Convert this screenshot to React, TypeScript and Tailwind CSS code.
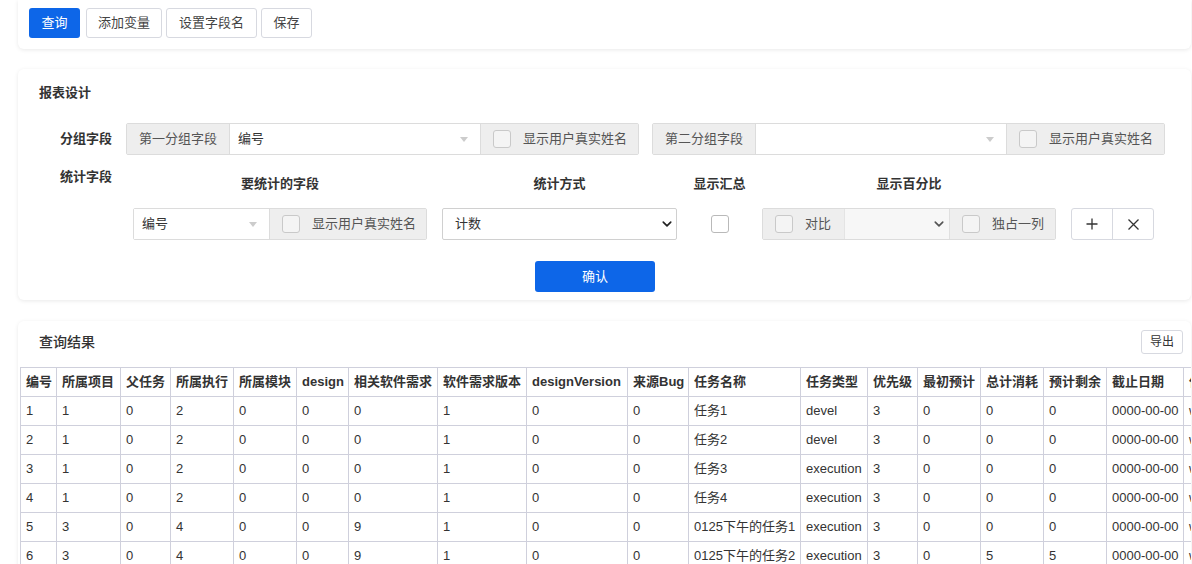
import React from 'react';

const Check = ({ className = '' }: { className?: string }) => (
  <span className={`inline-block w-[18px] h-[18px] rounded-[3px] border border-[#c9c9c9] bg-[#f4f4f4] ${className}`} />
);

const Caret = () => (
  <span className="w-0 h-0 border-l-[4px] border-r-[4px] border-t-[5px] border-l-transparent border-r-transparent border-t-[#cccccc]" />
);

const Chevron = ({ color = '#222' }: { color?: string }) => (
  <svg width="10" height="10" viewBox="0 0 16 16" fill="none" stroke={color} strokeWidth="2.6" strokeLinecap="round" strokeLinejoin="round">
    <path d="M2 5l6 6 6-6" />
  </svg>
);

const GroupField = ({ label }: { label: string }) => (
  <div className="flex h-[32px] w-[513px] border border-[#dcdcdc] rounded-[2px] text-[13px]">
    <div className="w-[103px] flex items-center justify-center bg-[#eeeeee] text-[#555] border-r border-[#dcdcdc]">{label}</div>
    <div className="w-[250px] flex items-center justify-between pl-[8px] pr-[12px] bg-white text-[#333]">
      <span>{label === '第一分组字段' ? '编号' : ''}</span>
      <Caret />
    </div>
    <div className="flex-1 flex items-center gap-[12px] pl-[12px] bg-[#eeeeee] text-[#555] border-l border-[#dcdcdc]">
      <Check />
      <span>显示用户真实姓名</span>
    </div>
  </div>
);

const cols: { name: string; w: number }[] = [
  { name: '编号', w: 36 },
  { name: '所属项目', w: 64 },
  { name: '父任务', w: 50 },
  { name: '所属执行', w: 63 },
  { name: '所属模块', w: 63 },
  { name: 'design', w: 52 },
  { name: '相关软件需求', w: 89 },
  { name: '软件需求版本', w: 89 },
  { name: 'designVersion', w: 101 },
  { name: '来源Bug', w: 61 },
  { name: '任务名称', w: 112 },
  { name: '任务类型', w: 67 },
  { name: '优先级', w: 50 },
  { name: '最初预计', w: 63 },
  { name: '总计消耗', w: 63 },
  { name: '预计剩余', w: 63 },
  { name: '截止日期', w: 77 },
  { name: '任务状态', w: 70 },
];

const rows: string[][] = [
  ['1', '1', '0', '2', '0', '0', '0', '1', '0', '0', '任务1', 'devel', '3', '0', '0', '0', '0000-00-00', 'wait'],
  ['2', '1', '0', '2', '0', '0', '0', '1', '0', '0', '任务2', 'devel', '3', '0', '0', '0', '0000-00-00', 'wait'],
  ['3', '1', '0', '2', '0', '0', '0', '1', '0', '0', '任务3', 'execution', '3', '0', '0', '0', '0000-00-00', 'wait'],
  ['4', '1', '0', '2', '0', '0', '0', '1', '0', '0', '任务4', 'execution', '3', '0', '0', '0', '0000-00-00', 'wait'],
  ['5', '3', '0', '4', '0', '0', '9', '1', '0', '0', '0125下午的任务1', 'execution', '3', '0', '0', '0', '0000-00-00', 'wait'],
  ['6', '3', '0', '4', '0', '0', '9', '1', '0', '0', '0125下午的任务2', 'execution', '3', '0', '5', '5', '0000-00-00', 'wait'],
];

export default function App() {
  return (
    <div className="w-[1192px] h-[564px] overflow-hidden bg-white text-[#333] font-['Liberation_Sans','Noto_Sans_CJK_SC',sans-serif]">
      {/* toolbar */}
      <div className="ml-[18px] mr-[1px] h-[49px] bg-white rounded-b-[6px] shadow-[0_1px_4px_rgba(0,0,0,0.09)] flex items-start pt-[8px] pl-[11px] text-[13px]">
        <button className="h-[30px] w-[51px] rounded-[3px] bg-[#0d66e8] text-white">查询</button>
        <button className="ml-[6px] h-[30px] w-[76px] rounded-[3px] border border-[#d7d9e0] text-[#444]">添加变量</button>
        <button className="ml-[4px] h-[30px] w-[91px] rounded-[3px] border border-[#d7d9e0] text-[#444]">设置字段名</button>
        <button className="ml-[4px] h-[30px] w-[51px] rounded-[3px] border border-[#d7d9e0] text-[#444]">保存</button>
      </div>

      {/* report design */}
      <div className="mt-[20px] ml-[18px] mr-[1px] h-[231px] bg-white rounded-[6px] shadow-[0_1px_4px_rgba(0,0,0,0.09)] pt-[14px] text-[13px]">
        <div className="pl-[21px] h-[20px] leading-[20px] font-bold">报表设计</div>

        <div className="mt-[20px] pl-[42px] flex items-center">
          <div className="w-[66px] font-bold">分组字段</div>
          <GroupField label="第一分组字段" />
          <div className="w-[13px]" />
          <GroupField label="第二分组字段" />
        </div>

        <div className="mt-[12px] pl-[42px] flex">
          <div className="w-[73px] h-[20px] leading-[20px] font-bold">统计字段</div>
          <div className="flex flex-col">
            <div className="mt-[7px] flex h-[20px] leading-[20px] font-bold">
              <div className="w-[294px] text-center">要统计的字段</div>
              <div className="w-[15px]" />
              <div className="w-[235px] text-center">统计方式</div>
              <div className="w-[85px] text-center">显示汇总</div>
              <div className="w-[294px] text-center">显示百分比</div>
            </div>

            <div className="mt-[14px] flex h-[32px]">
              <div className="w-[294px] flex border border-[#dcdcdc] rounded-[2px]">
                <div className="w-[135px] flex items-center justify-between pl-[8px] pr-[12px] bg-white">
                  <span>编号</span>
                  <Caret />
                </div>
                <div className="flex-1 flex items-center gap-[12px] pl-[12px] bg-[#eeeeee] text-[#555] border-l border-[#dcdcdc]">
                  <Check />
                  <span>显示用户真实姓名</span>
                </div>
              </div>
              <div className="w-[15px]" />
              <div className="w-[235px] flex items-center justify-between pl-[12px] pr-[4px] border border-[#d0d0d0] rounded-[2px] bg-white">
                <span>计数</span>
                <Chevron />
              </div>
              <div className="w-[85px] flex items-center justify-center">
                <span className="inline-block w-[18px] h-[18px] rounded-[3px] border border-[#b9b9b9] bg-white" />
              </div>
              <div className="w-[294px] flex border border-[#dcdcdc] rounded-[2px]">
                <div className="w-[81px] flex items-center gap-[12px] pl-[12px] bg-[#eeeeee] text-[#555]">
                  <Check />
                  <span>对比</span>
                </div>
                <div className="w-[105px] flex items-center justify-end pr-[5px] bg-[#f7f7f7] border-l border-[#e4e4e4]">
                  <Chevron color="#555" />
                </div>
                <div className="flex-1 flex items-center gap-[12px] pl-[12px] bg-[#eeeeee] text-[#555] border-l border-[#e0e0e0]">
                  <Check />
                  <span>独占一列</span>
                </div>
              </div>
              <div className="w-[15px]" />
              <div className="w-[83px] flex border border-[#d7d9e0] rounded-[3px] text-[#333]">
                <div className="w-[41px] flex items-center justify-center border-r border-[#d7d9e0]">
                  <svg width="12" height="12" viewBox="0 0 12 12" stroke="#333" strokeWidth="1.3"><path d="M6 0.5v11M0.5 6h11" /></svg>
                </div>
                <div className="flex-1 flex items-center justify-center">
                  <svg width="11" height="11" viewBox="0 0 11 11" stroke="#333" strokeWidth="1.3"><path d="M0.5 0.5l10 10M10.5 0.5l-10 10" /></svg>
                </div>
              </div>
            </div>

            <button className="mt-[21px] ml-[402px] h-[31px] w-[120px] rounded-[3px] bg-[#0d66e8] text-white">确认</button>
          </div>
        </div>
      </div>

      {/* results */}
      <div className="mt-[21px] ml-[18px] mr-[1px] h-[300px] bg-white rounded-t-[6px] shadow-[0_1px_4px_rgba(0,0,0,0.09)] pt-[9px] overflow-hidden text-[13px]">
        <div className="flex items-center justify-between pl-[21px] pr-[8px]">
          <span className="text-[14px] font-medium text-[#333]">查询结果</span>
          <button className="h-[24px] w-[42px] rounded-[3px] border border-[#d7d9e0] text-[12px] text-[#333]">导出</button>
        </div>
        <div className="mt-[13px] ml-[2px] overflow-hidden">
          <table className="table-fixed border-collapse text-[13px]" style={{ width: cols.reduce((s, c) => s + c.w, 0) }}>
            <colgroup>
              {cols.map((c) => (
                <col key={c.name} style={{ width: c.w }} />
              ))}
            </colgroup>
            <thead>
              <tr className="h-[29px]">
                {cols.map((c) => (
                  <th key={c.name} className="border border-[#cfd0dc] px-[5px] text-left font-bold whitespace-nowrap overflow-hidden">
                    {c.name}
                  </th>
                ))}
              </tr>
            </thead>
            <tbody>
              {rows.map((r, i) => (
                <tr key={i} className="h-[29px]">
                  {r.map((v, j) => (
                    <td key={j} className="border border-[#cfd0dc] px-[5px] whitespace-nowrap overflow-hidden text-[#333]">
                      {v}
                    </td>
                  ))}
                </tr>
              ))}
            </tbody>
          </table>
        </div>
      </div>
    </div>
  );
}
